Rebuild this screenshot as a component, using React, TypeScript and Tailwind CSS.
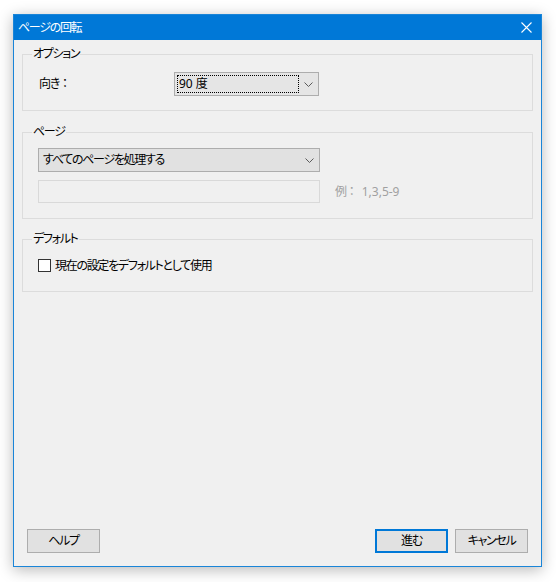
import React from "react";

function GroupBox({ label, className, children }: { label: string; className: string; children: React.ReactNode }) {
  return (
    <div className={`relative border border-[#dcdcdc] ${className}`}>
      <span className="absolute left-[9px] top-[-9px] bg-[#f0f0f0] px-[1px] text-[12px] leading-[16px] text-black">
        {label}
      </span>
      {children}
    </div>
  );
}

function Chevron() {
  return (
    <svg width="9" height="5" viewBox="0 0 9 5" className="shrink-0">
      <path d="M0.5 0.5 L4.5 4.5 L8.5 0.5" fill="none" stroke="#5a5a5a" strokeWidth="1" />
    </svg>
  );
}

function Button({ label, primary }: { label: string; primary?: boolean }) {
  return (
    <button
      className={`flex h-[24px] w-[73px] items-center justify-center bg-[#e1e1e1] text-[12px] text-black ${
        primary ? "border-2 border-[#0078d7]" : "border border-[#adadad]"
      }`}
    >
      {label}
    </button>
  );
}

export default function App() {
  return (
    <div className="min-h-[582px] w-[556px] bg-white pl-[13px] pt-[14px] font-['Noto_Sans','Noto_Sans_CJK_JP',sans-serif] [font-feature-settings:'palt'] tracking-[-1.3px]">
      <div className="flex h-[553px] w-[529px] flex-col border border-[#1a85d8] bg-[#f0f0f0] shadow-[0_3px_14px_rgba(0,0,0,0.28)]">
        {/* Title bar */}
        <div className="flex h-[25px] shrink-0 items-center justify-between bg-[#0078d7] pl-[4px] pr-[9px]">
          <span className="text-[12px] leading-none text-white">ページの回転</span>
          <svg width="11" height="11" viewBox="0 0 11 11">
            <path d="M0.5 0.5 L10.5 10.5 M10.5 0.5 L0.5 10.5" stroke="#fff" strokeWidth="1.1" />
          </svg>
        </div>

        {/* Body */}
        <div className="flex flex-1 flex-col px-[8px] pt-[14px]">
          <GroupBox label="オプション" className="pb-[14px] pl-[16px] pt-[17px]">
            <div className="flex items-center">
              <span className="w-[135px] text-[12px] text-black">
                向き<span className="[font-feature-settings:normal] tracking-normal">：</span>
              </span>
              <div className="flex h-[24px] w-[145px] items-center border border-[#adadad] bg-[#e5e5e5] pr-[4px] tracking-normal">
                <div className="ml-[2px] flex h-[18px] w-[122px] items-center border border-dotted border-black pl-[1px] text-[12px] text-black">
                  90 度
                </div>
                <div className="flex flex-1 justify-end pr-[1px]">
                  <Chevron />
                </div>
              </div>
            </div>
          </GroupBox>

          <GroupBox label="ページ" className="mt-[21px] flex flex-col gap-[8px] pb-[15px] pl-[15px] pt-[15px]">
            <div className="flex h-[24px] w-[282px] items-center justify-between border border-[#adadad] bg-[#e1e1e1] pl-[4px] pr-[5px] text-[12px] text-black">
              <span>すべてのページを処理する</span>
              <Chevron />
            </div>
            <div className="flex items-center">
              <div className="h-[23px] w-[282px] border border-[#d9d9d9] bg-[#f0f0f0]" />
              <span className="ml-[15px] text-[12px] text-[#a0a0a0]">
                例<span className="[font-feature-settings:normal] tracking-normal">：</span>
                <span className="ml-[4px] tracking-normal">1,3,5-9</span>
              </span>
            </div>
          </GroupBox>

          <GroupBox label="デフォルト" className="mt-[20px] pb-[17px] pl-[15px] pt-[17px]">
            <label className="flex h-[17px] items-center gap-[4px] text-[12px] text-black">
              <span className="h-[13px] w-[13px] border border-[#333333] bg-white" />
              現在の設定をデフォルトとして使用
            </label>
          </GroupBox>

          <div className="flex-1" />

          <div className="flex items-center pb-[13px] pl-[5px] pr-[5px]">
            <Button label="ヘルプ" />
            <div className="flex-1" />
            <div className="flex gap-[7px]">
              <Button label="進む" primary />
              <Button label="キャンセル" />
            </div>
          </div>
        </div>
      </div>
    </div>
  );
}
